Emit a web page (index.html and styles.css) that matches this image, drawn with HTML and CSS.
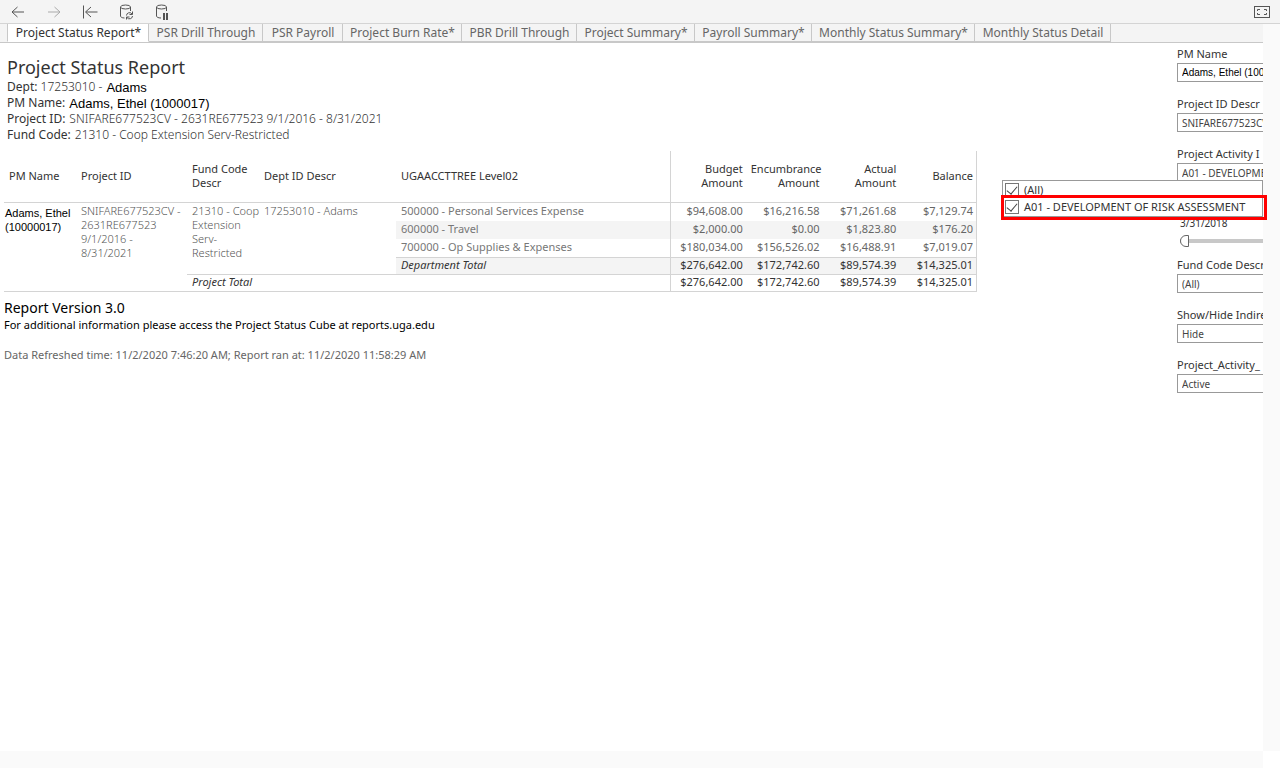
FILE: index.html
```html
<!DOCTYPE html>
<html lang="en">
<head>
<meta charset="utf-8">
<title>Project Status Report</title>
<link rel="stylesheet" href="styles.css">
</head>
<body>
<header class="toolbar">
  <button class="tool" aria-label="Undo"><svg width="16" height="16" viewBox="0 0 16 16"><path d="M14 8H2M7.500 3L2 8l5.500 5"/></svg></button>
  <button class="tool tool-off" aria-label="Redo" disabled><svg width="16" height="16" viewBox="0 0 16 16"><path d="M2 8h12M8.500 3L14 8l-5.500 5"/></svg></button>
  <button class="tool" aria-label="Revert"><svg width="16" height="16" viewBox="0 0 16 16"><path d="M1.500 1.500v13M15.500 8H4M9 3L3.500 8L9 13"/></svg></button>
  <button class="tool" aria-label="Refresh"><svg width="16" height="16" viewBox="0 0 16 16"><path d="M6.500 14C4 14 2.500 13 2.500 12V3M12.500 3v4"/><ellipse cx="7.500" cy="3" rx="5" ry="2"/><path d="M8.500 11.500a3 3 0 0 1 5.500-1.500M14.500 12a3 3 0 0 1-5.500 1.500M14.500 7.500v3h-3M8.500 15.500v-2.500h3"/></svg></button>
  <button class="tool" aria-label="Pause"><svg width="16" height="16" viewBox="0 0 16 16"><path d="M7 14C4 14 2.500 13 2.500 12V3M12.500 3v4"/><ellipse cx="7.500" cy="3" rx="5" ry="2"/><path class="bars" d="M10 9v7M13 9v7"/></svg></button>
  <button class="tool tool-full" aria-label="Full screen"><svg width="18" height="14" viewBox="0 0 18 14"><rect x="1.500" y="1.500" width="15" height="11"/><path d="M4.500 6V4.500H7M11 4.500h2.500V6M4.500 8v1.500H7M11 9.500h2.500V8"/></svg></button>
</header>
<div class="view">
  <div class="page">
    <nav class="tabs">
      <a class="tab tab-on" href="#">Project Status Report*</a>
      <a class="tab" href="#">PSR Drill Through</a>
      <a class="tab" href="#">PSR Payroll</a>
      <a class="tab" href="#">Project Burn Rate*</a>
      <a class="tab" href="#">PBR Drill Through</a>
      <a class="tab" href="#">Project Summary*</a>
      <a class="tab" href="#">Payroll Summary*</a>
      <a class="tab" href="#">Monthly Status Summary*</a>
      <a class="tab" href="#">Monthly Status Detail</a>
    </nav>
    <div class="dashboard">
      <main class="report">
        <div class="heading">
          <h1>Project Status Report</h1>
          <p><span>Dept: <span class="light">17253010 -</span></span><b class="name">Adams</b></p>
          <p><span>PM Name:</span><b class="name">Adams, Ethel (1000017)</b></p>
          <p><span>Project ID:</span><span class="light">SNIFARE677523CV - 2631RE677523 9/1/2016 - 8/31/2021</span></p>
          <p><span>Fund Code:</span><span class="light">21310 - Coop Extension Serv-Restricted</span></p>
        </div>
        <table class="sheet">
          <colgroup><col class="c-pm"><col class="c-project"><col class="c-fund"><col class="c-dept"><col class="c-level"><col class="c-num"><col class="c-num"><col class="c-num"><col class="c-num"></colgroup>
          <thead>
            <tr><th>PM Name</th><th>Project ID</th><th>Fund Code Descr</th><th>Dept ID Descr</th><th>UGAACCTTREE Level02</th><th class="num first">Budget Amount</th><th class="num">Encumbrance Amount</th><th class="num">Actual Amount</th><th class="num last">Balance</th></tr>
          </thead>
          <tbody>
            <tr><td rowspan="5" class="wrap person">Adams, Ethel (10000017)</td><td rowspan="5" class="wrap">SNIFARE677523CV - 2631RE677523 9/1/2016 - 8/31/2021</td><td rowspan="4" class="wrap"><span class="keep">21310 - Coop</span> Extension Serv-Restricted</td><td rowspan="4" class="wrap">17253010 - Adams</td><td>500000 - Personal Services Expense</td><td class="num first">$94,608.00</td><td class="num">$16,216.58</td><td class="num">$71,261.68</td><td class="num last">$7,129.74</td></tr>
            <tr class="band"><td>600000 - Travel</td><td class="num first">$2,000.00</td><td class="num">$0.00</td><td class="num">$1,823.80</td><td class="num last">$176.20</td></tr>
            <tr><td>700000 - Op Supplies &amp; Expenses</td><td class="num first">$180,034.00</td><td class="num">$156,526.02</td><td class="num">$16,488.91</td><td class="num last">$7,019.07</td></tr>
            <tr class="band total"><td class="label">Department Total</td><td class="num first">$276,642.00</td><td class="num">$172,742.60</td><td class="num">$89,574.39</td><td class="num last">$14,325.01</td></tr>
            <tr class="total"><td class="label" colspan="3">Project Total</td><td class="num first">$276,642.00</td><td class="num">$172,742.60</td><td class="num">$89,574.39</td><td class="num last">$14,325.01</td></tr>
          </tbody>
        </table>
        <footer class="notes">
          <h2>Report Version 3.0</h2>
          <p>For additional information please access the Project Status Cube at reports.uga.edu</p>
          <p class="stamp">Data Refreshed time: 11/2/2020 7:46:20 AM; Report ran at: 11/2/2020 11:58:29 AM</p>
        </footer>
      </main>
      <aside class="filters">
        <div class="filter"><label for="pm">PM Name</label><select id="pm" class="person"><option>Adams, Ethel (1000017)</option></select></div>
        <div class="filter"><label for="proj">Project ID Descr</label><select id="proj"><option>SNIFARE677523CV - 2631RE677523</option></select></div>
        <div class="filter"><label for="act">Project Activity I</label><select id="act"><option>A01 - DEVELOPMENT OF RISK ASSESSMENT</option></select></div>
        <div class="filter range"><label for="date">3/31/2018</label><input id="date" type="range" min="0" max="100" value="0"></div>
        <div class="filter"><label for="fund">Fund Code Descr</label><select id="fund"><option>(All)</option></select></div>
        <div class="filter"><label for="ind">Show/Hide Indire</label><select id="ind"><option>Hide</option></select></div>
        <div class="filter"><label for="stat">Project_Activity_</label><select id="stat"><option>Active</option></select></div>
        <div class="menu">
          <label><input type="checkbox" checked>(All)</label>
          <label><input type="checkbox" checked>A01 - DEVELOPMENT OF RISK ASSESSMENT</label>
          <div class="highlight"></div>
        </div>
      </aside>
    </div>
  </div>
  <div class="track"></div>
  <div class="track"></div>
</div>
</body>
</html>
```
FILE: styles.css
```css
* { box-sizing: border-box; }
body {
  margin: 0;
  min-height: 100vh;
  display: flex;
  flex-direction: column;
  background: #fff;
  color: #333;
  font-family: "Noto Sans", "Open Sans", sans-serif;
  font-size: 12px;
}
h1, h2, p { margin: 0; font-weight: 400; }

.toolbar {
  display: flex;
  align-items: center;
  gap: 20px;
  height: 24px;
  padding: 0 9px 0 10px;
  background: #f4f4f4;
  border-bottom: 1px solid #d4d4d4;
}
.tool { display: flex; padding: 0; border: 0; background: none; color: #555; }
.tool-off { color: #aaa; }
.tool-full { margin-left: auto; }
.tool svg { fill: none; stroke: currentColor; stroke-width: 1; }
.tool .bars { stroke-width: 2; }

.view {
  flex: 1;
  display: grid;
  grid-template-columns: minmax(0, 1fr) 17px;
  grid-template-rows: 1fr 17px;
}
.track { background: #fafafa; }

.tabs {
  display: grid;
  grid-template-columns: 142px 114px 80px 119px 115px 118px 117px 163px 136px;
  height: 19px;
  padding-left: 7px;
  background: #f4f4f4;
  border-bottom: 1px solid #c8c8c8;
}
.tab {
  padding-left: 1px;
  border-right: 1px solid #c8c8c8;
  border-bottom: 1px solid #c8c8c8;
  color: #666;
  line-height: 17px;
  text-align: center;
  text-decoration: none;
  white-space: nowrap;
}
.tab-on { background: #fff; border-left: 1px solid #c8c8c8; border-bottom-color: #fff; color: #333; }

.dashboard { display: flex; justify-content: space-between; }
.report { padding: 13px 0 0 4px; }
.heading { padding-left: 3px; }
.heading h1 { font-size: 18px; line-height: 23px; }
.heading p { display: flex; gap: 4px; line-height: 16px; }
.light { font-weight: 300; }
.name { font: 400 13px/18px "Liberation Sans", Arial, sans-serif; height: 16px; color: #000; }

.sheet {
  width: 973px;
  margin-top: 8px;
  table-layout: fixed;
  border-collapse: separate;
  border-spacing: 0;
  border-bottom: 1px solid #d4d4d4;
  font-size: 11px;
  line-height: 14px;
}
.c-pm { width: 72px; }
.c-project { width: 111px; }
.c-fund { width: 72px; }
.c-dept { width: 137px; }
.c-level { width: 274px; }
.sheet th {
  height: 52px;
  padding: 0 5px 2px;
  border-bottom: 1px solid #d4d4d4;
  font-weight: 400;
  text-align: left;
}
.sheet td { height: 18px; padding: 0 5px 2px; color: #777; white-space: nowrap; }
.sheet .wrap { padding: 1px 0 0 5px; color: #555; font-weight: 300; white-space: normal; vertical-align: top; }
.sheet .keep { white-space: nowrap; }
.sheet .num { padding: 0 4px 2px; text-align: right; color: #666; }
.sheet th.num { color: #333; }
.sheet .first { border-left: 1px solid #d4d4d4; }
.sheet .last { padding-right: 3px; border-right: 1px solid #d4d4d4; }
.sheet .band td { background: #f4f4f4; }
.sheet .total td { height: 17px; border-top: 1px solid #d4d4d4; color: #333; }
.sheet .label { font-style: italic; }
.sheet .person { padding: 3px 1px; font-weight: 400; }
.sheet .person, .filter .person { font-family: "Liberation Sans", Arial, sans-serif; color: #000; }

.notes { padding-top: 7px; font-size: 11px; line-height: 16px; color: #000; }
.notes h2 { font-size: 14px; line-height: 18px; }
.notes .stamp { margin-top: 14px; color: #666; }

.filters { position: relative; width: 86px; padding-top: 2px; }
.filter { height: 50px; overflow: hidden; }
.filter label { display: block; font-size: 11px; line-height: 18px; white-space: nowrap; }
.filter select {
  display: block;
  width: 100%;
  height: 19px;
  padding: 0 0 0 4px;
  border: 1px solid #999;
  border-right: 0;
  border-radius: 0;
  appearance: none;
  background: #fff;
  color: #444;
  font: 10px "Noto Sans", sans-serif;
}
.range { height: 61px; padding: 19px 0 0 3px; }
.range label { font-size: 10px; }
.range input { display: block; width: 100%; height: 18px; margin: 0; appearance: none; background: none; }
.range input::-webkit-slider-runnable-track { height: 4px; background: #c8c8c8; }
.range input::-webkit-slider-thumb {
  appearance: none;
  width: 9px;
  height: 12px;
  margin-top: -4px;
  border: 1px solid #666;
  border-radius: 6px 0 0 6px;
  background: #fff;
}

.menu {
  position: absolute;
  top: 137px;
  right: 0;
  width: 261px;
  padding: 0 0 1px 2px;
  border: 1px solid #999;
  background: #fff;
  font-size: 11px;
}
.menu label { display: flex; align-items: center; gap: 5px; height: 17px; white-space: nowrap; }
.menu input {
  width: 14px;
  height: 14px;
  margin: 0;
  border: 1px solid #777;
  appearance: none;
  display: grid;
  place-items: center;
}
.menu input::before {
  content: "";
  width: 5px;
  height: 9px;
  margin-bottom: 2px;
  border: solid #444;
  border-width: 0 1px 1px 0;
  transform: rotate(40deg);
}
.highlight { position: absolute; top: 14px; left: -2px; right: -5px; height: 25px; border: 3px solid #f00; }
```
